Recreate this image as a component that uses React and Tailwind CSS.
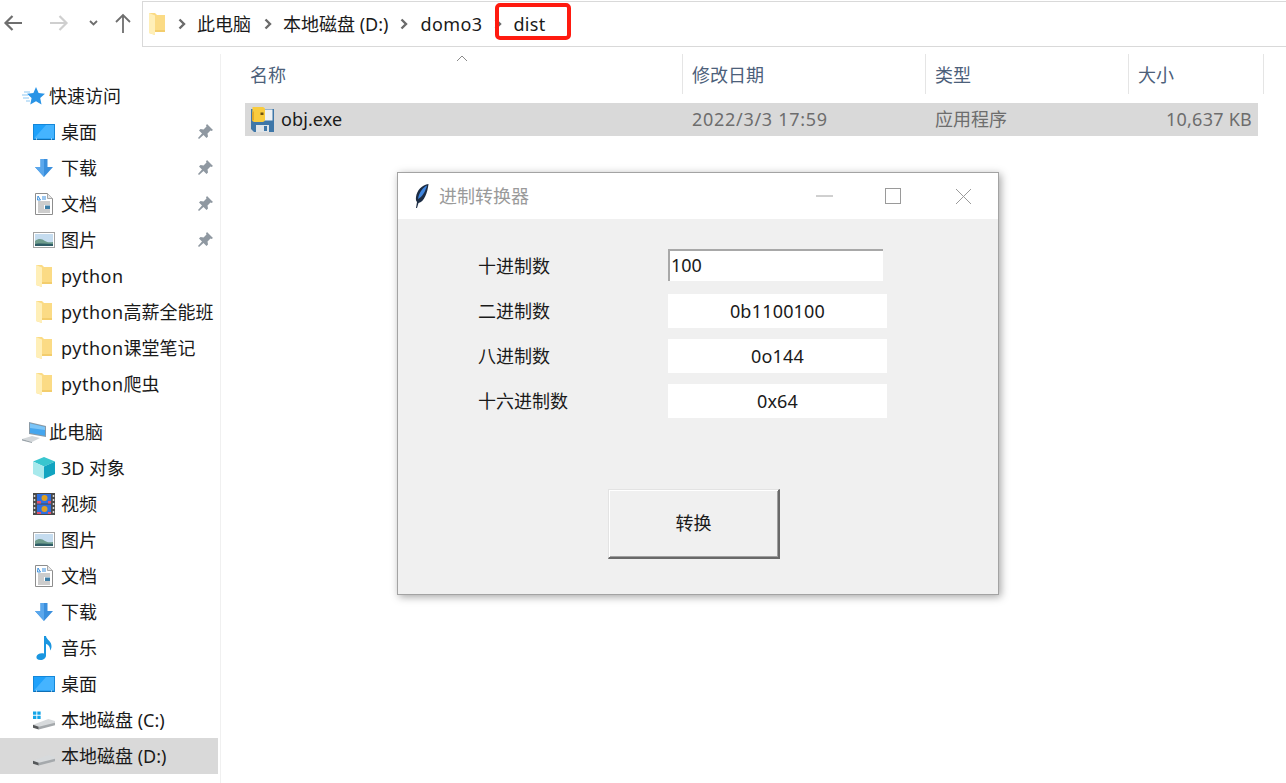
import React from 'react';

const FONT = 'font-["Noto_Sans","Noto_Sans_CJK_SC",sans-serif]';

const FolderIcon = () => (
  <svg width="16" height="22" viewBox="0 0 16 22">
    <path d="M0 0h6l2 2h8v17H6v3l-6-2z" fill="#fbdb85" />
    <path d="M0 0l6 2.500V22l-6-2z" fill="#ffefb8" />
    <path d="M6 17h10v2H6z" fill="#f3cd6c" />
  </svg>
);

const DesktopIcon = () => (
  <svg width="22" height="17" viewBox="0 0 22 17">
    <rect x="0" y="0" width="22" height="16" fill="#1487d9" />
    <rect x="1" y="1" width="20" height="13.500" fill="#1ea1fb" />
    <path d="M1 14.500L13 1h8v13.500z" fill="#45b4ff" />
    <rect x="1" y="15" width="20" height="1" fill="#0f6fb5" />
    <path d="M3 15h1M18 15h1" stroke="#fff" strokeWidth="1" />
  </svg>
);

const DownIcon = () => (
  <svg width="20" height="20" viewBox="0 0 20 20">
    <path d="M6.500 1h7v8H19l-9 10L1 9h5.500z" fill="#3a8fdd" />
    <path d="M6.500 1H10v18L1 9h5.500z" fill="#5aa7ec" />
  </svg>
);

const DocIcon = () => (
  <svg width="18" height="22" viewBox="0 0 18 22">
    <path d="M.5.5h12l5 5v16H.5z" fill="#fff" stroke="#8d8d8d" />
    <path d="M12.500.5v5h5" fill="#e6e6e6" stroke="#a8a8a8" />
    <path d="M3 3l2.500 4H2.500zM7 4h4M7 6h4" stroke="#3a8fdd" strokeWidth="1" fill="none" />
    <path d="M3 9h12M3 11h12M3 13h6M3 15h6M3 17h12M3 19h12" stroke="#9a9a9a" strokeWidth="1" />
    <rect x="10" y="12.500" width="5" height="3.500" fill="#3e7fa8" />
  </svg>
);

const PictureIcon = () => (
  <svg width="22" height="16" viewBox="0 0 22 16">
    <rect x=".5" y=".5" width="21" height="15" fill="#fff" stroke="#a3a3a3" />
    <rect x="2" y="2" width="18" height="12" fill="#c5dcef" />
    <path d="M2 9c4-3 7-2 10 0s6 1 8 1v4H2z" fill="#6f9c8c" />
    <path d="M2 12c6-1 12 0 18 0v2H2z" fill="#2f5d66" />
  </svg>
);

const StarIcon = () => (
  <svg width="23" height="19" viewBox="0 0 23 19">
    <path d="M14 0l2.600 6 6.400.7-4.800 4.300 1.300 6.500L14 14.300l-5.700 3.200 1.300-6.500L5 6.700l6.400-.7z" fill="#2a94e6" />
    <path d="M2 5h6M0 8h6M1 11h6M4 14h4" stroke="#8cc8f3" strokeWidth="1.200" />
  </svg>
);

const PcIcon = () => (
  <svg width="25" height="21" viewBox="0 0 25 21">
    <path d="M7 0l17 4v11L7 12z" fill="#8a9aa6" />
    <path d="M8 1.500l15 3.500v8.800L8 11z" fill="#45a6ee" />
    <path d="M8 1.500l15 3.500v3L8 6z" fill="#7cc5f7" />
    <path d="M0 17l10-3 8 2-8 4z" fill="#d3d7da" />
    <path d="M0 17l10 3v1L0 18.500z" fill="#99a2a8" />
  </svg>
);

const CubeIcon = () => (
  <svg width="22" height="22" viewBox="0 0 22 22">
    <path d="M11 0l11 4.500-11 5-11-5z" fill="#39c6cf" />
    <path d="M0 4.500l11 5V22L0 17z" fill="#a8e9ec" />
    <path d="M22 4.500l-11 5V22l11-5z" fill="#12a4c0" />
  </svg>
);

const FilmIcon = () => (
  <svg width="22" height="22" viewBox="0 0 22 22">
    <rect width="22" height="22" fill="#4a4a4a" />
    <path d="M1.500 2v18M20.500 2v18" stroke="#d8d8d8" strokeWidth="1.500" strokeDasharray="2 2" />
    <rect x="4" y="1" width="14" height="9.500" fill="#2f6fe0" />
    <rect x="4" y="11.500" width="14" height="9.500" fill="#2f6fe0" />
    <circle cx="11.500" cy="5" r="3" fill="#e0a020" />
    <circle cx="11.500" cy="16" r="3" fill="#e0a020" />
    <path d="M4 8h4v2.500H4zM15 8h3v2.500h-3zM4 19h4v2H4zM15 19h3v2h-3z" fill="#e2506a" />
  </svg>
);

const MusicIcon = () => (
  <svg width="18" height="24" viewBox="0 0 18 24">
    <path d="M9 0h2c.5 4 6 5 5.500 11-.2 2-1 3-1.500 3.500.5-3-1.500-6-4-6.500v11.500c0 2.500-2.500 4.500-5.500 4.500S1 22.500 1.500 20.500 5 16.500 9 17.500z" fill="#1a96e0" />
  </svg>
);

const DriveIcon = ({ windows }) => (
  <svg width="23" height="20" viewBox="0 0 23 20">
    {windows && <path d="M0 1h3.500v3.500H0zM4.500 1H8v3.500H4.500zM0 5.500h3.500V9H0zM4.500 5.500H8V9H4.500z" fill="#14a5e8" />}
    <path d="M0 15l16-6 7 2v3L6 19l-6-2z" fill="#d7dadc" />
    <path d="M0 15l6 2v3l-6-2z" fill="#55585a" />
    <path d="M6 17l17-4v2.500L6 20z" fill="#a5a9ac" />
  </svg>
);

const PinIcon = () => (
  <svg width="15" height="16" viewBox="0 0 15 16">
    <path d="M9 0l6 6-1.500 1-1-.5-3 3 .5 3-1.500 1.500-3-3L1 15l-1-1 4-4.500-3-3L2.500 5l3 .5 3-3L8 1.500z" fill="#8f98a1" />
  </svg>
);

// pyinstaller style floppy: blue disk, yellow tab top left
const FloppyIcon = () => (
  <svg width="23" height="25" viewBox="0 0 23 25">
    <path d="M0 2h23v23H3l-3-3z" fill="#3f77a8" />
    <rect x="13" y="2.500" width="8.500" height="11" fill="#eef1f4" />
    <path d="M1.500 0h10c1.500 0 2.500 1 2.500 2.500v10c0 1.500-1 2.500-2.500 2.500h-8C2 15 1 14 1 12.500z" fill="#f9cc3e" />
    <path d="M1 6l2-2v9l-2 1z" fill="#e0a92a" />
    <rect x="9.500" y="5.500" width="3" height="2.500" fill="#6e5415" />
    <rect x="5" y="18" width="13" height="7" fill="#dfe4e8" />
    <rect x="13" y="19" width="3" height="5" fill="#3f77a8" />
  </svg>
);

const FeatherIcon = () => (
  <svg width="16" height="26" viewBox="0 0 16 26">
    <path d="M14.500 1C8 2 3 7 2 14c-.3 2 0 4 1 5L2 25h1l1.500-5C10 19 13.500 10 14.500 1z" fill="#1c2c44" />
    <path d="M13 2.500C9 4.500 5 9 4 16c4-2 7.500-7.500 9-13.500z" fill="#3f86e0" />
  </svg>
);

const Chevron = ({ className }) => (
  <svg width="8" height="12" viewBox="0 0 8 12" className={className}>
    <path d="M1.500 1.500L6 6l-4.500 4.500" fill="none" stroke="#6b6b6b" strokeWidth="2.400" />
  </svg>
);

const Py = () => <span className="tracking-[0.5px]">python</span>;

const quickItems = [
  { label: '桌面', icon: <DesktopIcon />, pin: true },
  { label: '下载', icon: <DownIcon />, pin: true },
  { label: '文档', icon: <DocIcon />, pin: true },
  { label: '图片', icon: <PictureIcon />, pin: true },
  { label: <Py />, icon: <FolderIcon /> },
  { label: <><Py />高薪全能班</>, icon: <FolderIcon /> },
  { label: <><Py />课堂笔记</>, icon: <FolderIcon /> },
  { label: <><Py />爬虫</>, icon: <FolderIcon /> },
];

const pcItems = [
  { label: '3D 对象', icon: <CubeIcon /> },
  { label: '视频', icon: <FilmIcon /> },
  { label: '图片', icon: <PictureIcon /> },
  { label: '文档', icon: <DocIcon /> },
  { label: '下载', icon: <DownIcon /> },
  { label: '音乐', icon: <MusicIcon /> },
  { label: '桌面', icon: <DesktopIcon /> },
  { label: '本地磁盘 (C:)', icon: <DriveIcon windows /> },
  { label: '本地磁盘 (D:)', icon: <DriveIcon />, active: true },
];

const GroupRow = ({ icon, label }) => (
  <div className="h-9 flex items-center pl-[22px]">
    <span className="w-[27px] flex justify-start">{icon}</span>
    <span className="text-[18px] text-[#1a1a1a] whitespace-nowrap">{label}</span>
  </div>
);

const NavRow = ({ item }) => (
  <div className={`h-9 w-[218px] flex items-center pl-[33px] ${item.active ? 'bg-[#d9d9d9]' : ''}`}>
    <span className="w-[28px] shrink-0 flex justify-center pr-[6px]">{item.icon}</span>
    <span className="text-[18px] text-[#1a1a1a] whitespace-nowrap flex-1">{item.label}</span>
    {item.pin && (
      <span className="mr-[5px]">
        <PinIcon />
      </span>
    )}
  </div>
);

const Toolbar = () => (
  <div className="h-[47px] flex items-start shrink-0">
    <div className="w-[142px] h-[46px] flex items-center shrink-0">
      <svg width="20" height="18" viewBox="0 0 20 18" className="ml-[3px]">
        <path d="M19 9H3M9.500 2L2.500 9l7 7" fill="none" stroke="#6e6e6e" strokeWidth="2.200" />
      </svg>
      <svg width="20" height="18" viewBox="0 0 20 18" className="ml-[26px]">
        <path d="M1 9h16M10.500 2l7 7-7 7" fill="none" stroke="#cfcfcf" strokeWidth="2.200" />
      </svg>
      <svg width="9" height="6" viewBox="0 0 9 6" className="ml-[20px]">
        <path d="M1 1l3.500 3.500L8 1" fill="none" stroke="#6e6e6e" strokeWidth="1.800" />
      </svg>
      <svg width="16" height="20" viewBox="0 0 16 20" className="ml-[17px]">
        <path d="M8 20V2M1 9l7-7 7 7" fill="none" stroke="#6e6e6e" strokeWidth="1.800" />
      </svg>
    </div>
    <div className="mt-px h-[46px] flex-1 border-t border-b border-l border-[#d9d9d9] flex items-center text-[18px] text-[#1a1a1a]">
      <span className="ml-[6px]">
        <FolderIcon />
      </span>
      <Chevron className="ml-[13px]" />
      <span className="ml-[11px]">此电脑</span>
      <Chevron className="ml-[13px]" />
      <span className="ml-[11px]">本地磁盘 (D:)</span>
      <Chevron className="ml-[12px]" />
      <span className="ml-[12px] tracking-[0.4px]">domo3</span>
      <Chevron className="ml-[12px]" />
      <div className="relative ml-[11px]">
        <span className="tracking-[0.3px]">dist</span>
        <div className="absolute left-[-18px] top-[-8px] w-[76px] h-[37px] border-4 border-[#ff1a0f] rounded-[5px]" />
      </div>
    </div>
  </div>
);

const Sidebar = () => (
  <aside className="w-[221px] shrink-0 mt-[7px] border-r border-[#f0f0f0] pt-[24px]">
    <GroupRow icon={<StarIcon />} label="快速访问" />
    {quickItems.map((item, i) => (
      <NavRow key={i} item={item} />
    ))}
    <div className="h-3" />
    <GroupRow icon={<PcIcon />} label="此电脑" />
    {pcItems.map((item, i) => (
      <NavRow key={i} item={item} />
    ))}
  </aside>
);

const HeaderCell = ({ label, width }) => (
  <div className={`${width} h-10 border-r border-[#e5e5e5] flex items-center pl-[9px] pt-[2px] text-[18px] text-[#4c607a]`}>{label}</div>
);

const FileList = () => (
  <main className="flex-1 relative pl-[24px]">
    <div className="flex pt-[7px]">
      <div className="relative w-[438px] h-10 border-r border-[#e5e5e5] flex items-center pl-[5px] pt-[2px] text-[18px] text-[#4c607a]">
        名称
        <svg width="12" height="7" viewBox="0 0 12 7" className="absolute left-[211px] top-[1px]">
          <path d="M1 6l5-5 5 5" fill="none" stroke="#8a8a8a" strokeWidth="1" />
        </svg>
      </div>
      <HeaderCell label="修改日期" width="w-[243px]" />
      <HeaderCell label="类型" width="w-[203px]" />
      <HeaderCell label="大小" width="w-[135px]" />
    </div>
    <div className="mt-[9px] w-[1013px] h-[33px] bg-[#d9d9d9] flex items-center text-[18px] text-[#6d6d6d]">
      <span className="w-[437px] flex items-center pl-[6px] text-[#1a1a1a]">
        <FloppyIcon />
        <span className="ml-[7px] tracking-[0.1px]">obj.exe</span>
      </span>
      <span className="w-[243px] pl-[10px] tracking-[0.7px]">2022/3/3 17:59</span>
      <span className="w-[203px] pl-[10px]">应用程序</span>
      <span className="w-[130px] text-right pr-[6px] tracking-[0.25px]">10,637 KB</span>
    </div>
  </main>
);

const ValueRow = ({ label, value }) => (
  <div className="flex items-center h-[34px]">
    <span className="w-[190px] text-[18px] text-[#1a1a1a]">{label}</span>
    <span className="w-[219px] h-[34px] bg-white flex items-center justify-center text-[18px] text-[#1a1a1a] tracking-[0.2px]">{value}</span>
  </div>
);

const ConverterWindow = () => (
  <div className="absolute left-[397px] top-[172px] w-[602px] h-[423px] bg-[#f0f0f0] border border-[#a3a3a3] shadow-[2px_2px_8px_rgba(0,0,0,0.35)] flex flex-col">
    <div className="h-[46px] bg-white flex items-center pl-[16px] shrink-0">
      <FeatherIcon />
      <span className="ml-[9px] text-[18px] text-[#9a9a9a]">进制转换器</span>
      <svg width="18" height="2" viewBox="0 0 18 2" className="ml-[287px]">
        <path d="M0 1h17" stroke="#a0a0a0" strokeWidth="1" />
      </svg>
      <svg width="16" height="16" viewBox="0 0 16 16" className="ml-[51px]">
        <rect x=".5" y=".5" width="15" height="15" fill="none" stroke="#9a9a9a" />
      </svg>
      <svg width="17" height="17" viewBox="0 0 17 17" className="ml-[54px]">
        <path d="M1 1l15 15M16 1L1 16" stroke="#9a9a9a" strokeWidth="1" />
      </svg>
    </div>
    <div className="pl-[80px] pt-[30px] flex flex-col gap-[11px]">
      <div className="flex items-start h-[34px]">
        <span className="w-[190px] text-[18px] leading-[34px] text-[#1a1a1a]">十进制数</span>
        <input
          readOnly
          value="100"
          className="w-[215px] h-[32px] bg-white border-t-2 border-l-2 border-[#a8a8a8] pl-[1px] pb-[3px] text-[18px] text-[#1a1a1a] outline-none"
        />
      </div>
      <ValueRow label="二进制数" value="0b1100100" />
      <ValueRow label="八进制数" value="0o144" />
      <ValueRow label="十六进制数" value="0x64" />
    </div>
    <button className="ml-[210px] mt-[71px] w-[172px] h-[70px] bg-[#f0f0f0] border border-r-2 border-b-2 border-t-[#e3e3e3] border-l-[#e3e3e3] border-r-[#696969] border-b-[#696969] shadow-[inset_1px_1px_0_#ffffff,inset_-1px_-1px_0_#a0a0a0] text-[18px] text-[#1a1a1a]">
      转换
    </button>
  </div>
);

export default function App() {
  return (
    <div className={`relative w-[1286px] h-[783px] overflow-hidden bg-white flex flex-col ${FONT}`}>
      <Toolbar />
      <div className="flex flex-1">
        <Sidebar />
        <FileList />
      </div>
      <ConverterWindow />
    </div>
  );
}
